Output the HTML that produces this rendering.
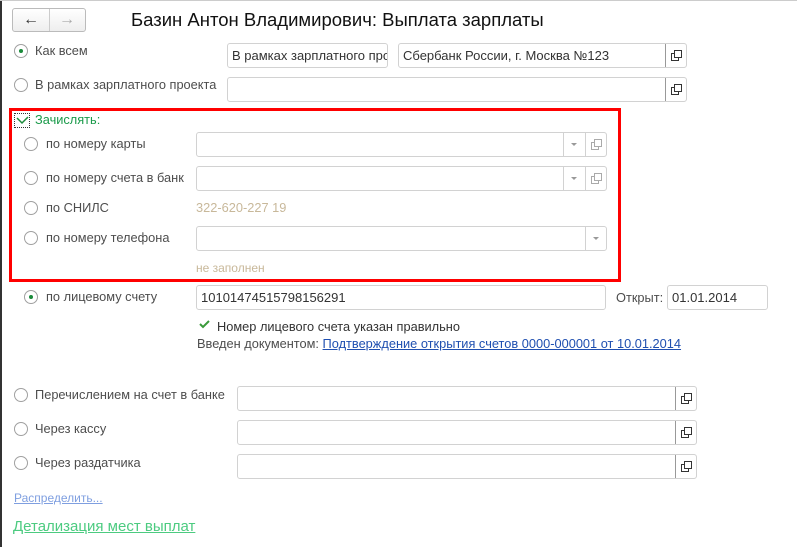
<!DOCTYPE html>
<html><head><meta charset="utf-8"><style>
*{box-sizing:border-box;margin:0;padding:0}
body{width:797px;height:547px;background:#fff;position:relative;overflow:hidden;font-family:"Liberation Sans",Arial,sans-serif;font-size:12.8px;color:#4d4d4d}
.a{position:absolute;white-space:nowrap}
.r{position:absolute;width:14px;height:14px;border:1px solid #a0a0a0;border-radius:50%;background:#fff}
.r.on::after{content:"";position:absolute;left:4px;top:4px;width:4px;height:4px;border-radius:50%;background:#1a8a3a}
.in{position:absolute;border:1px solid #d2d2d2;border-radius:3px;background:#fff;height:25px;padding:4px 0 0 4px;color:#333;font-size:13px;overflow:hidden;white-space:nowrap}
.btn{position:absolute;top:-1px;right:-1px;width:22px;height:25px;border:1px solid #d2d2d2;border-left-color:#999;border-radius:0 3px 3px 0}
.dd{position:absolute;top:-1px;width:21px;height:25px;border-left:1px solid #d2d2d2}
.dd::after{content:"";position:absolute;left:7px;top:11px;border-left:3px solid transparent;border-right:3px solid transparent;border-top:3px solid #999}
svg.cp{position:absolute;left:5px;top:6px}
</style></head><body>
<div class="a" style="left:0;top:0;width:2px;height:547px;background:#333"></div>
<div class="a" style="left:0;top:0;width:797px;height:1px;background:#ccc"></div>
<div class="a" style="left:12px;top:8px;width:74px;height:24px;border:1px solid #bbb;border-radius:3px;background:linear-gradient(#fff,#eee)"></div>
<div class="a" style="left:49px;top:9px;width:1px;height:22px;background:#ccc"></div>
<div class="a" style="left:23px;top:11px;font-size:16px;color:#333;font-weight:bold">&#x2190;</div>
<div class="a" style="left:59px;top:11px;font-size:16px;color:#aaa;font-weight:bold">&#x2192;</div>
<div class="a" style="left:131px;top:9px;font-size:18.5px;color:#111">Базин Антон Владимирович: Выплата зарплаты</div>

<div class="r on" style="left:14px;top:44px"></div><div class="a" style="left:35px;top:43px">Как всем</div>
<div class="in" style="left:227px;top:43px;width:161px">В рамках зарплатного про</div>
<div class="in" style="left:398px;top:43px;width:289px">Сбербанк России, г. Москва №123<div class="btn"><svg class="cp" width="11" height="11"><path d="M3.5 3.5H.5v7h7V7.5M3.5.5h7v7h-7z" fill="none" stroke="#333"/></svg></div></div>
<div class="r" style="left:14px;top:78px"></div><div class="a" style="left:35px;top:77px">В рамках зарплатного проекта</div>
<div class="in" style="left:227px;top:77px;width:460px"><div class="btn"><svg class="cp" width="11" height="11"><path d="M3.5 3.5H.5v7h7V7.5M3.5.5h7v7h-7z" fill="none" stroke="#333"/></svg></div></div>

<div class="a" style="left:9px;top:108px;width:612px;height:174px;border:3px solid #f00"></div>
<div class="a" style="left:14px;top:113px;width:16px;height:15px;border:1px dotted #333"></div>
<svg class="a" style="left:16px;top:115px" width="13" height="11"><path d="M1 3l5 5 6-6" fill="none" stroke="#1a8a3a" stroke-width="1.5"/></svg>
<div class="a" style="left:35px;top:112px;color:#1a9a4a">Зачислять:</div>

<div class="r" style="left:24px;top:137px"></div><div class="a" style="left:46px;top:136px">по номеру карты</div>
<div class="in" style="left:196px;top:132px;width:411px"><div class="dd" style="right:22px"></div><div class="btn" style="border-left-color:#d2d2d2"><svg class="cp" width="11" height="11"><path d="M3.5 3.5H.5v7h7V7.5M3.5.5h7v7h-7z" fill="none" stroke="#aaa"/></svg></div></div>
<div class="r" style="left:24px;top:171px"></div><div class="a" style="left:46px;top:170px">по номеру счета в банк</div>
<div class="in" style="left:196px;top:166px;width:411px"><div class="dd" style="right:22px"></div><div class="btn" style="border-left-color:#d2d2d2"><svg class="cp" width="11" height="11"><path d="M3.5 3.5H.5v7h7V7.5M3.5.5h7v7h-7z" fill="none" stroke="#aaa"/></svg></div></div>
<div class="r" style="left:24px;top:201px"></div><div class="a" style="left:46px;top:200px">по СНИЛС</div>
<div class="a" style="left:196px;top:200px;color:#c8b89a">322-620-227 19</div>
<div class="r" style="left:24px;top:231px"></div><div class="a" style="left:46px;top:230px">по номеру телефона</div>
<div class="in" style="left:196px;top:226px;width:411px"><div class="dd" style="right:0"></div></div>
<div class="a" style="left:196px;top:261px;color:#c8b89a;font-size:12px">не заполнен</div>

<div class="r on" style="left:24px;top:290px"></div><div class="a" style="left:46px;top:289px">по лицевому счету</div>
<div class="in" style="left:196px;top:285px;width:410px">10101474515798156291</div>
<div class="a" style="left:616px;top:290px">Открыт:</div>
<div class="in" style="left:667px;top:285px;width:101px">01.01.2014</div>
<svg class="a" style="left:199px;top:320px" width="11" height="9"><path d="M1 4l3 3 6-6" fill="none" stroke="#3a9a3a" stroke-width="2"/></svg>
<div class="a" style="left:217px;top:319px;color:#333">Номер лицевого счета указан правильно</div>
<div class="a" style="left:197px;top:336px">Введен документом: <span style="color:#1f4fb0;text-decoration:underline">Подтверждение открытия счетов 0000-000001 от 10.01.2014</span></div>

<div class="r" style="left:14px;top:388px"></div><div class="a" style="left:35px;top:387px">Перечислением на счет в банке</div>
<div class="in" style="left:237px;top:386px;width:460px"><div class="btn"><svg class="cp" width="11" height="11"><path d="M3.5 3.5H.5v7h7V7.5M3.5.5h7v7h-7z" fill="none" stroke="#333"/></svg></div></div>
<div class="r" style="left:14px;top:422px"></div><div class="a" style="left:35px;top:421px">Через кассу</div>
<div class="in" style="left:237px;top:420px;width:460px"><div class="btn"><svg class="cp" width="11" height="11"><path d="M3.5 3.5H.5v7h7V7.5M3.5.5h7v7h-7z" fill="none" stroke="#333"/></svg></div></div>
<div class="r" style="left:14px;top:456px"></div><div class="a" style="left:35px;top:455px">Через раздатчика</div>
<div class="in" style="left:237px;top:454px;width:460px"><div class="btn"><svg class="cp" width="11" height="11"><path d="M3.5 3.5H.5v7h7V7.5M3.5.5h7v7h-7z" fill="none" stroke="#333"/></svg></div></div>

<div class="a" style="left:14px;top:491px;color:#7f9fe0;text-decoration:underline;font-size:12px">Распределить...</div>
<div class="a" style="left:13px;top:518px;color:#4ccb80;text-decoration:underline;font-size:15px">Детализация мест выплат</div>
</body></html>
